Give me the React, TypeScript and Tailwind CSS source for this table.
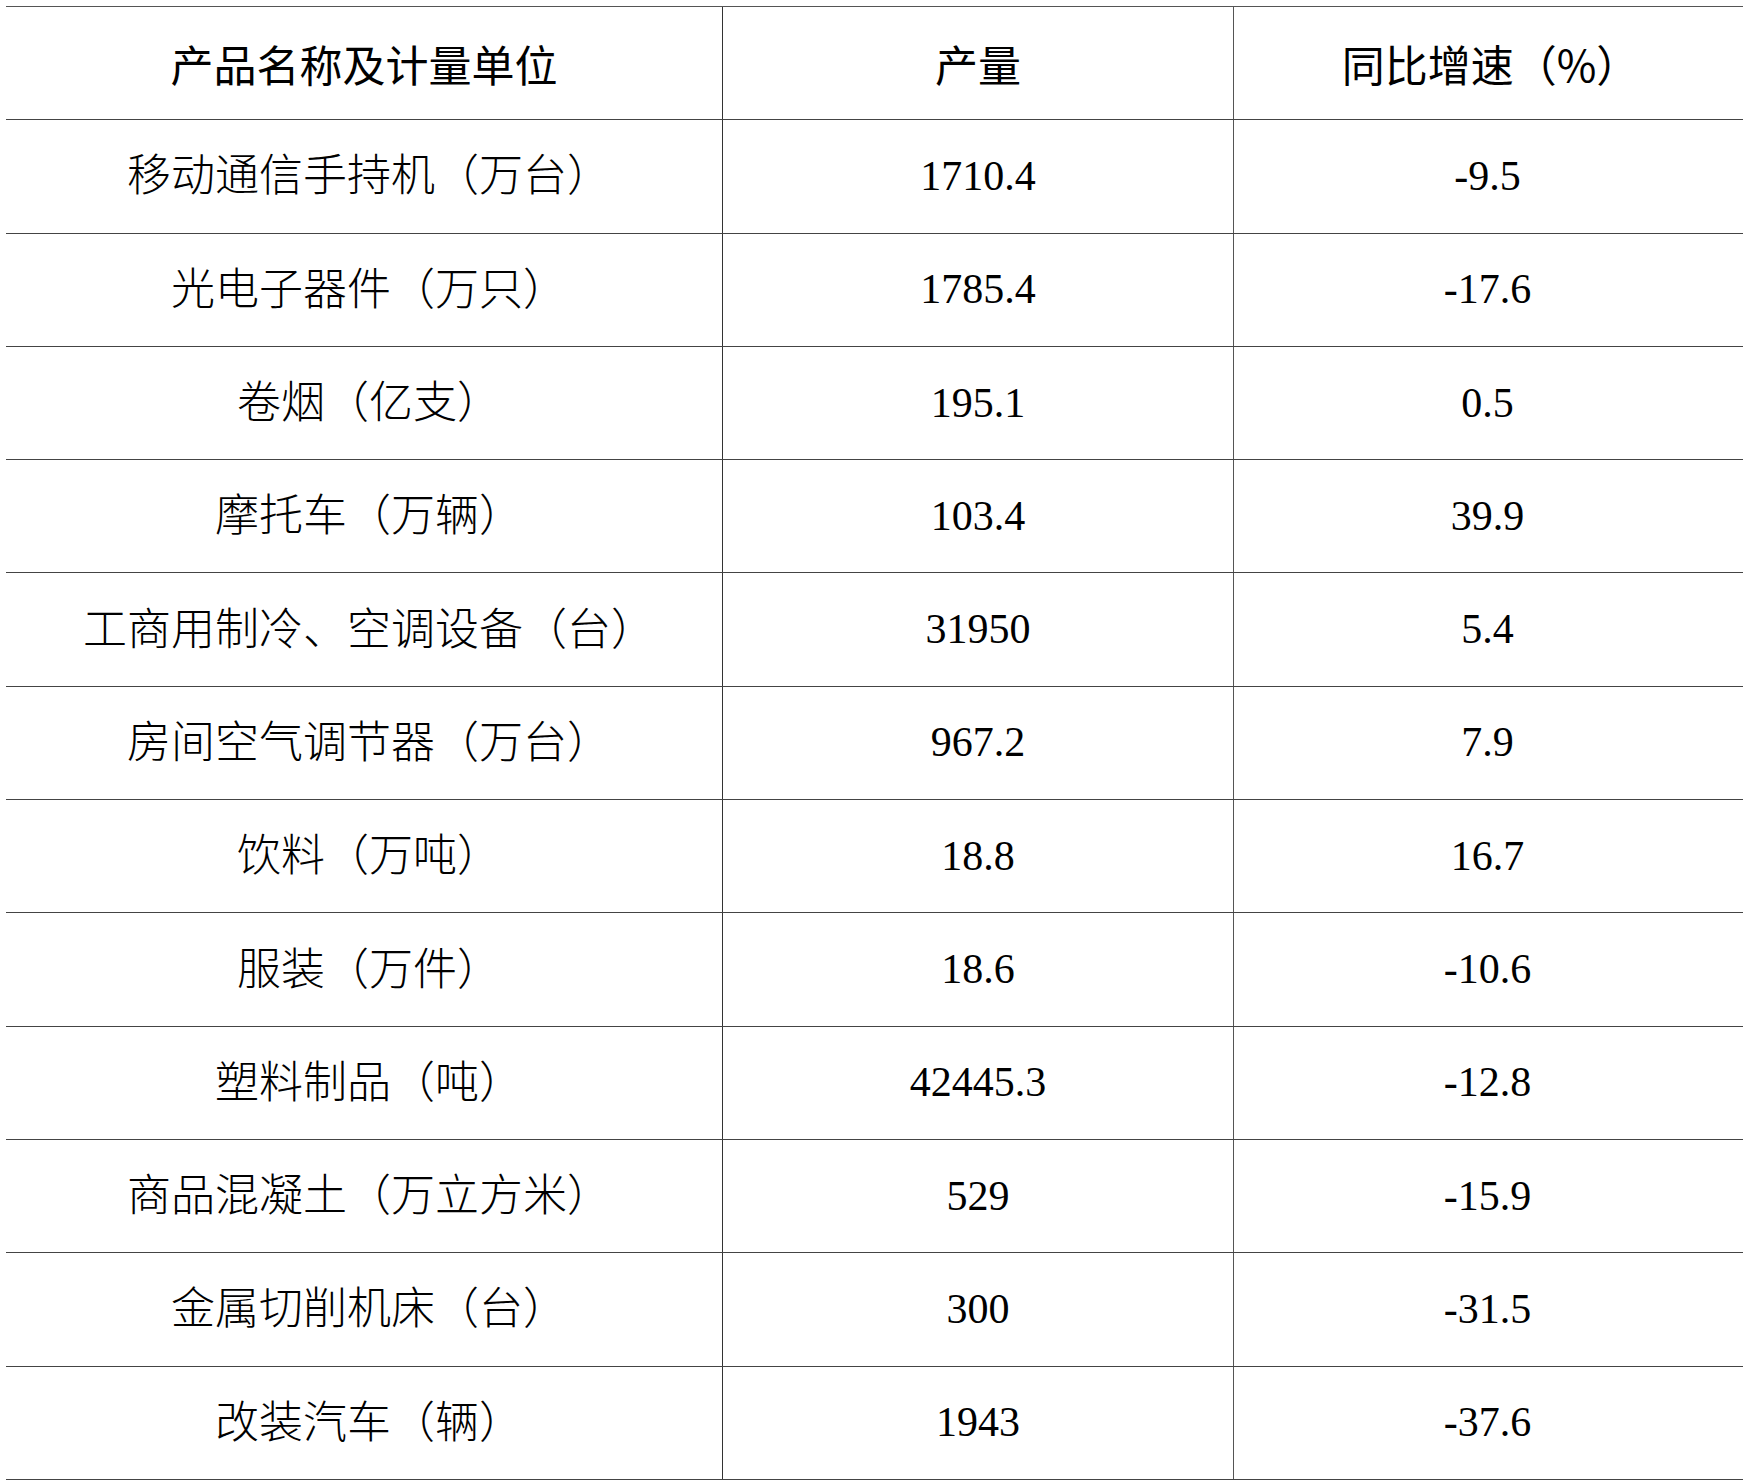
const rows: [string, string, string][] = [
  ["移动通信手持机（万台）", "1710.4", "-9.5"],
  ["光电子器件（万只）", "1785.4", "-17.6"],
  ["卷烟（亿支）", "195.1", "0.5"],
  ["摩托车（万辆）", "103.4", "39.9"],
  ["工商用制冷、空调设备（台）", "31950", "5.4"],
  ["房间空气调节器（万台）", "967.2", "7.9"],
  ["饮料（万吨）", "18.8", "16.7"],
  ["服装（万件）", "18.6", "-10.6"],
  ["塑料制品（吨）", "42445.3", "-12.8"],
  ["商品混凝土（万立方米）", "529", "-15.9"],
  ["金属切削机床（台）", "300", "-31.5"],
  ["改装汽车（辆）", "1943", "-37.6"],
];

const sans = "font-['Noto_Sans_CJK_SC',sans-serif]";
const serif = "font-['Liberation_Serif','Noto_Sans_CJK_SC',serif]";

export default function App() {
  return (
    <div className="min-h-[1480px] bg-white pt-[6px] pl-[6px] text-black">
      <div className="border-b border-[#444]">
        {/* header */}
        <div
          className={`grid h-[113.3px] grid-cols-[716px_511px_1fr] border-t border-[#555] text-[43px] ${sans}`}
        >
          <div className="flex items-center justify-center">产品名称及计量单位</div>
          <div className="flex items-center justify-center border-l border-[#333]">产量</div>
          <div className="flex items-center justify-center border-l border-[#555] pl-[4px]">
            同比增速（%）
          </div>
        </div>

        {rows.map(([name, output, growth]) => (
          <div
            key={name}
            className={`grid h-[113.3px] grid-cols-[716px_511px_1fr] border-t border-[#444] text-[42px] font-light ${serif}`}
          >
            <div className="flex items-center justify-center pt-[2px] pl-[10px] text-[44px]">{name}</div>
            <div className="flex items-center justify-center border-l border-[#333]">{output}</div>
            <div className="flex items-center justify-center border-l border-[#555] pr-[2px]">
              {growth}
            </div>
          </div>
        ))}
      </div>
    </div>
  );
}
